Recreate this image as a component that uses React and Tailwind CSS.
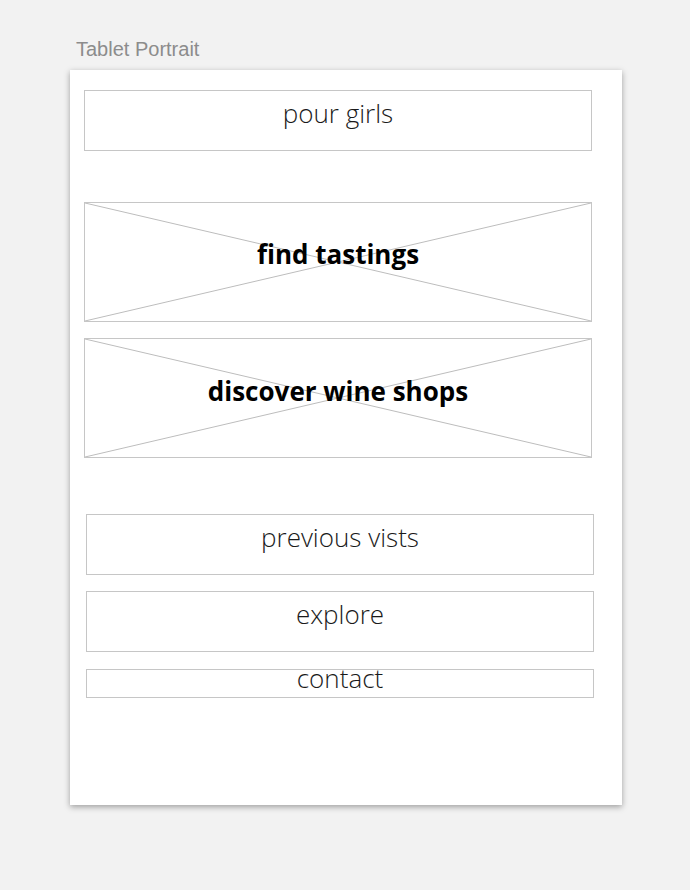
export default function App() {
  const light = "font-['Open_Sans',sans-serif] font-light text-[26px] leading-[26px] text-[#1a1a1a] text-center";
  const bold = "font-['Open_Sans',sans-serif] font-bold text-[26px] leading-[26px] text-black text-center";

  const Cross = () => (
    <svg
      className="absolute inset-0 w-full h-full"
      viewBox="0 0 100 100"
      preserveAspectRatio="none"
    >
      <line x1="0" y1="0" x2="100" y2="100" stroke="#bdbdbd" strokeWidth="1" vectorEffect="non-scaling-stroke" />
      <line x1="0" y1="100" x2="100" y2="0" stroke="#bdbdbd" strokeWidth="1" vectorEffect="non-scaling-stroke" />
    </svg>
  );

  return (
    <div className="min-h-[890px] bg-[#f2f2f2] pt-[38px] pl-[70px]">
      {/* Artboard label */}
      <div className="ml-[6px] h-[32px] font-['Liberation_Sans',Arial,sans-serif] text-[20px] leading-[23px] text-[#8c8c8c]">
        Tablet Portrait
      </div>

      {/* Artboard */}
      <div className="w-[552px] h-[735px] bg-white shadow-[0_2px_6px_rgba(0,0,0,0.35)] pt-[20px] flex flex-col">
        <div className="ml-[14px] w-[508px] h-[61px] border border-[#c6c6c6] pt-[9px]">
          <div className={light}>pour girls</div>
        </div>

        {/* Hero tiles */}
        <div className="relative ml-[14px] mt-[51px] w-[508px] h-[120px] border border-[#c6c6c6] pt-[38px]">
          <Cross />
          <div className={"relative " + bold}>find tastings</div>
        </div>
        <div className="relative ml-[14px] mt-[16px] w-[508px] h-[120px] border border-[#c6c6c6] pt-[39px]">
          <Cross />
          <div className={"relative " + bold}>discover wine shops</div>
        </div>

        {/* Menu */}
        <div className="ml-[16px] mt-[56px] w-[508px] h-[61px] border border-[#c6c6c6] pt-[9px]">
          <div className={light}>previous vists</div>
        </div>
        <div className="ml-[16px] mt-[16px] w-[508px] h-[61px] border border-[#c6c6c6] pt-[9px]">
          <div className={light}>explore</div>
        </div>
        <div className="ml-[16px] mt-[17px] w-[508px] h-[29px] border border-[#c6c6c6]">
          <div className={"-mt-[5px] " + light}>contact</div>
        </div>
      </div>
    </div>
  );
}
